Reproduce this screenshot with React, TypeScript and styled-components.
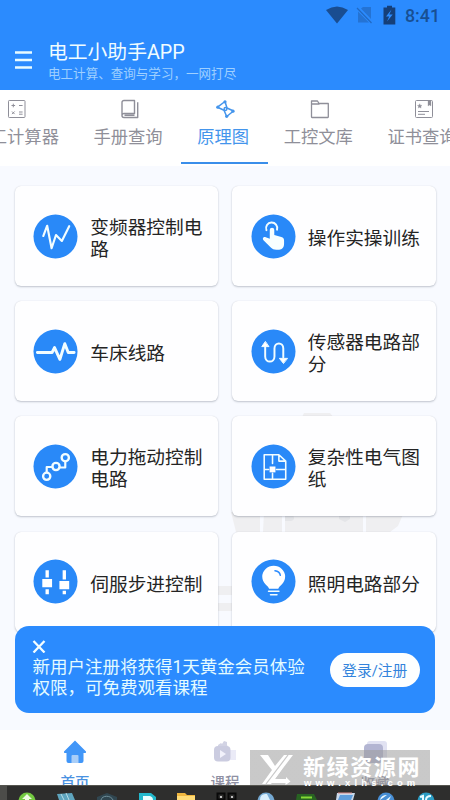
import React from "react";
import styled, { createGlobalStyle } from "styled-components";

const BLUE = "#2b8bfe";

const GlobalStyle = createGlobalStyle`
  * { box-sizing: border-box; }
  body { margin: 0; background: #f8faff; font-family: Roboto, "Noto Sans CJK SC", sans-serif; }
`;

const Screen = styled.div`
  position: relative;
  width: 450px;
  height: 800px;
  overflow: hidden;
  display: flex;
  flex-direction: column;
  background: #f8faff;
`;

const Header = styled.header`
  flex: none;
  height: 90px;
  background: ${BLUE};
`;

const StatusBar = styled.div`
  height: 32px;
  padding: 0 10px 0 0;
  display: flex;
  justify-content: flex-end;
  align-items: center;
  color: #184f93;
`;

const StatusIcons = styled.svg`
  display: block;
  margin-right: 9px;
`;

const Clock = styled.span`
  font-size: 17.8px;
  line-height: 20px;
  font-weight: 500;
`;

const TitleBar = styled.div`
  display: flex;
  align-items: flex-start;
  padding-left: 15px;
`;

const MenuIcon = styled.svg`
  display: block;
  margin: 18px 15px 0 0;
`;

const Title = styled.h1`
  margin: 7px 0 0;
  height: 26px;
  font-size: 19.8px;
  line-height: 27px;
  font-weight: 400;
  color: #f0fcff;
  white-space: nowrap;
`;

const Subtitle = styled.p`
  margin: 0;
  font-size: 12.55px;
  line-height: 18px;
  color: #9fd0ff;
`;

const Tabs = styled.nav`
  flex: none;
  height: 76px;
  background: #fff;
  overflow: hidden;
  display: flex;
`;

const TabTrack = styled.div`
  display: flex;
  margin-left: -43.3px;
`;

const Tab = styled.div<{ $active?: boolean }>`
  flex: none;
  height: 73.5px;
  padding: 9px 17.3px 0;
  display: flex;
  flex-direction: column;
  align-items: center;
  color: ${(p) => (p.$active ? "#4495ec" : "#8f8f99")};
  border-bottom: 2.5px solid ${(p) => (p.$active ? "#3a8eea" : "transparent")};
  svg { display: block; }
`;

const TabLabel = styled.span`
  margin: 5px 1.5px 0 -1.5px;
  font-size: 17.3px;
  line-height: 26px;
  white-space: nowrap;
`;

const Content = styled.main`
  position: relative;
  flex: none;
  height: 564px;
  padding: 20px 14.5px 0;
  overflow: hidden;
`;

const Backdrop = styled.svg`
  position: absolute;
  left: 0;
  top: 0;
`;

const CardGrid = styled.div`
  position: relative;
  display: grid;
  grid-template-columns: 203px 203.5px;
  grid-auto-rows: 100px;
  gap: 15.2px 14.5px;
`;

const Card = styled.div`
  display: flex;
  align-items: center;
  padding-left: 18.5px;
  border-radius: 6px;
  background: #fefeff;
  box-shadow: 0 1px 2px rgba(40, 50, 70, 0.26), 0 0 1px rgba(40, 50, 70, 0.15);
`;

const CardIcon = styled.svg`
  flex: none;
  display: block;
  margin-right: 12.3px;
`;

const CardLabel = styled.span`
  width: 116px;
  padding-top: 6px;
  font-size: 18.7px;
  line-height: 22px;
  color: #242424;
`;

const Banner = styled.section`
  position: absolute;
  left: 15px;
  top: 626px;
  width: 420px;
  height: 87px;
  padding: 13.5px 15px 0 17.5px;
  border-radius: 14px;
  background: ${BLUE};
  display: flex;
  justify-content: space-between;
`;

const BannerText = styled.div`
  width: 280px;
  color: #e4fbff;
  font-size: 17.5px;
  line-height: 20.6px;
  svg { display: block; margin: 0 0 4.5px -1px; }
`;

const BannerLine = styled.div`
  white-space: nowrap;
`;

const LoginButton = styled.button`
  margin: 13px 0 0;
  width: 90.5px;
  height: 34.5px;
  padding: 0;
  border: 0;
  border-radius: 18px;
  background: #fdffff;
  color: #3284dc;
  font-family: inherit;
  font-size: 14.8px;
  line-height: 36px;
`;

const BottomNav = styled.nav`
  flex: none;
  height: 55px;
  background: #fff;
  display: grid;
  grid-template-columns: repeat(3, 150px);
  overflow: hidden;
`;

const NavItem = styled.div<{ $active?: boolean }>`
  height: 62px;
  display: flex;
  flex-direction: column;
  align-items: center;
  padding-top: 9px;
  color: ${(p) => (p.$active ? "#4a92e2" : "#8f90a3")};
  font-size: 14.5px;
  font-weight: 500;
  line-height: 22px;
  svg { display: block; flex: none; margin-bottom: 7.5px; }
`;

const Taskbar = styled.footer`
  position: relative;
  flex: none;
  height: 15px;
  background: #2e2e2d;
  svg { display: block; }
`;

const Watermark = styled.div`
  position: absolute;
  left: 250px;
  top: 750px;
  width: 180px;
  height: 36px;
  display: flex;
  padding-left: 9px;
  overflow: hidden;
  background: linear-gradient(rgba(155, 155, 155, 0.54) 35px, transparent 35px);
  color: #fff;
  svg { display: block; flex: none; margin-right: 8px; }
`;

const WatermarkName = styled.div`
  height: 25px;
  margin-top: 2.5px;
  font-family: "Noto Sans CJK SC", sans-serif;
  font-size: 22px;
  font-weight: 700;
  line-height: 25px;
  letter-spacing: 1.6px;
  white-space: nowrap;
`;

const WatermarkUrl = styled.div`
  margin-left: 1px;
  font-family: "Liberation Sans", sans-serif;
  font-size: 9.5px;
  font-weight: 700;
  line-height: 9px;
  letter-spacing: 4.15px;
  white-space: nowrap;
`;

const line = { fill: "none", stroke: "currentColor", strokeLinejoin: "round" as const };

const tabs = [
  {
    label: "电工计算器",
    icon: (
      <g {...line} strokeWidth="1">
        <rect x="1.5" y="1.5" width="16.5" height="17" rx="0.8" />
        <path d="M4.5 6.5h3.6M6.3 4.7v3.6M12 6.5h3.6M5 12.5l2.6 2.6M7.6 12.5l-2.6 2.6M12 13h3.6M12 15.2h3.6" />
      </g>
    ),
  },
  {
    label: "手册查询",
    icon: (
      <g {...line} strokeWidth="1.4">
        <path d="M4 1.5h10.5v13H4a2 2 0 0 0 0 4h13.7V3.2M2 16.5V3.5a2 2 0 0 1 2-2M4.5 16.3h10" />
      </g>
    ),
  },
  {
    label: "原理图",
    active: true,
    icon: (
      <g {...line} strokeWidth="1.5">
        <path d="M10 2.500L2.500 8.200l6.500 3 2.700 6.300 6.800-5.500-6.500-3z" />
        <circle cx="10.500" cy="10" r="1.400" fill="#fff" />
        <g fill="currentColor" stroke="none">
          <circle cx="10" cy="2.800" r="1.600" />
          <circle cx="2.800" cy="8.200" r="1.600" />
          <circle cx="18" cy="12.200" r="1.600" />
          <circle cx="11.700" cy="17.300" r="1.600" />
        </g>
      </g>
    ),
  },
  {
    label: "工控文库",
    icon: (
      <g {...line} strokeWidth="1.3">
        <path d="M1.5 18V2h6l1.5 2.5h9.3V18a.5.5 0 0 1-.5.5H2a.5.5 0 0 1-.5-.5zM1.5 5h8" />
      </g>
    ),
  },
  {
    label: "证书查询",
    icon: (
      <g {...line} strokeWidth="1">
        <rect x="1.5" y="1.5" width="17" height="17" rx="1" />
        <path d="M5.7 4.7l.7 1.5 1.6.2-1.2 1.1.3 1.6-1.400-.8-1.400.8.3-1.600-1.200-1.100 1.600-.2zM14 2h3v5l-1.500-1-1.500 1z" fill="currentColor" strokeWidth="0.3" />
        <path d="M4 12.5h11M4 15.3h7" />
      </g>
    ),
  },
];

const cards = [
  {
    label: "变频器控制电路",
    icon: <path d="M10.5 22.5l4-10.5 4.5 23 4.5-13.5 6 6L37 12.5" strokeWidth="2.2" />,
  },
  {
    label: "操作实操训练",
    icon: (
      <>
        <path d="M15.8 16.5a5.700 5.700 0 1 1 10.800-.5" strokeWidth="2" />
        <path d="M19.2 16.5c0-3.300 4.600-3.300 4.600 0v5l7.200 2c2 .6 2.800 1.700 2.800 3.500v3.500c0 3.800-2 6-5 6h-3c-2.500 0-4-.7-5.300-2l-7.500-7.500c-1.800-1.800-.4-4 2-3.300l4.200 1.500z" fill="#f8ffff" stroke="none" />
      </>
    ),
  },
  {
    label: "车床线路",
    icon: <path d="M4.5 24h15l2.500-5 5.500 12 5-16 3.500 9h6" strokeWidth="3" />,
  },
  {
    label: "传感器电路部分",
    icon: (
      <>
        <path d="M14.5 17v11c0 7 9.500 7 9.500 0v-8c0-7 9-7 9 0v9" strokeWidth="2" />
        <path d="M14.5 13l-3.500 5h7zM33 35l-4-5h8z" fill="#fff" strokeWidth="1" />
      </>
    ),
  },
  {
    label: "电力拖动控制电路",
    icon: (
      <>
        <path d="M14 28.500v-5h6M27 24h6v-6" strokeWidth="2.2" />
        <circle cx="14" cy="33" r="3.7" strokeWidth="2.4" />
        <circle cx="23.5" cy="23" r="3.7" strokeWidth="2.4" />
        <circle cx="33" cy="14" r="3.7" strokeWidth="2.4" />
      </>
    ),
  },
  {
    label: "复杂性电气图纸",
    icon: (
      <>
        <path d="M13.5 11h15l7 6.500V36h-22zM28.500 11v6.500h7M22 11v9M22 30v6M13.500 26H18M26 26h9" strokeWidth="1.6" />
        <rect x="19" y="23" width="6" height="6" fill="#fff" stroke="none" />
      </>
    ),
  },
  {
    label: "伺服步进控制",
    icon: (
      <path
        d="M12.8 11.5h3.400v7.500h-3.400zM9.500 20.500h10v8.500h-10zM12.800 31h3.400v5h-3.400zM30.300 11.500h3.400v9.500h-3.400zM27 22.500h10V31H27zM30.300 32.500h3.400V36h-3.400z"
        fill="#fff"
        stroke="none"
      />
    ),
  },
  {
    label: "照明电路部分",
    icon: (
      <>
        <path d="M18.500 30.500c-.6-3-7-5.500-7-12.300a11.700 11.200 0 0 1 23.400 0c0 6.800-6.300 9.300-7 12.300z" fill="#fff" stroke="none" />
        <path d="M24.500 12c3 .3 5 2 5.500 4.700" stroke={BLUE} strokeWidth="1.5" />
        <path d="M18 33h10.500M20 36.500h6.500" strokeWidth="1.7" />
      </>
    ),
  },
];

export default function App() {
  return (
    <>
      <GlobalStyle />
      <Screen>
        <Header>
          <StatusBar>
            <StatusIcons width="71" height="22" viewBox="0 0 71 22">
              <path d="M1 5Q12 -2 23 5L12 18.500z" fill="#194d91" />
              <path d="M36 3.500L46 14V2H38zM33 6.500V17.500h11z" fill="#2473d4" />
              <path d="M32 3L46.500 18" stroke="#2169c3" strokeWidth="1.2" />
              <path d="M58.500 2.500H62V.8h5v1.700h3.300v17H58.500z" fill="#153f78" />
              <path d="M66.500 4.500l-5.500 7h3.200l-2.200 5 5.700-7h-3.400z" fill={BLUE} />
            </StatusIcons>
            <Clock>8:41</Clock>
          </StatusBar>
          <TitleBar>
            <MenuIcon width="18" height="20" viewBox="0 0 18 20">
              <path d="M0 2.500h17M0 10h17M0 17.500h17" stroke="#e8fbff" strokeWidth="2.3" />
            </MenuIcon>
            <div>
              <Title>电工小助手APP</Title>
              <Subtitle>电工计算、查询与学习，一网打尽</Subtitle>
            </div>
          </TitleBar>
        </Header>

        <Tabs>
          <TabTrack>
            {tabs.map((t) => (
              <Tab key={t.label} $active={t.active}>
                <svg width="20" height="20" viewBox="0 0 20 20">{t.icon}</svg>
                <TabLabel>{t.label}</TabLabel>
              </Tab>
            ))}
          </TabTrack>
        </Tabs>

        <Content>
          <Backdrop width="450" height="564" viewBox="0 0 450 564" fill="#efeff1">
            <path d="M304 247h26l5 6h-34zM217 420h16v9h-16zM217 437h16v8h-16z" />
            <path d="M231 346h29v20h-24zM264 346h18v20h-19zM285 346h78v20h-78zM366 346h38l-6 14-8 6h-24z" />
            <path d="M285 349h8q3 5-2 6h-6zM339 349h11v4l-5 3-6-3z" fill="#e4e5e8" />
          </Backdrop>
          <CardGrid>
            {cards.map((c) => (
              <Card key={c.label}>
                <CardIcon width="45" height="45" viewBox="0 0 46 46" fill="none" stroke="#f2fdff" strokeLinejoin="round" strokeLinecap="round">
                  <circle cx="23" cy="23" r="22.5" fill="#2989f8" stroke="none" />
                  {c.icon}
                </CardIcon>
                <CardLabel>{c.label}</CardLabel>
              </Card>
            ))}
          </CardGrid>
        </Content>

        <BottomNav>
          <NavItem $active>
            <svg width="26" height="26" viewBox="0 0 26 26">
              <path d="M13 1.500L24 12.500q.5 1.500-1 1.500h-1.500v8q0 2-2 2h-13q-2 0-2-2v-8H3q-1.500 0-1-1.500z" fill="#4196f8" />
              <path d="M9.500 17q0-1 1-1h5q1 0 1 1v7h-7z" fill="#a9cef8" />
            </svg>
            首页
          </NavItem>
          <NavItem>
            <svg width="26" height="26" viewBox="0 0 26 26">
              <path d="M9 11h15v10H9z" fill="#ebebf7" />
              <path d="M6 8V6l3-2 1 1 2-3 3 1v3l1 2" fill="#d2d3e4" />
              <rect x="2" y="7" width="16.5" height="15.5" rx="4" fill="#cbcce0" />
              <path d="M8 11l6 4-6 4z" fill="#f2f2fb" />
            </svg>
            课程
          </NavItem>
          <NavItem>
            <svg width="26" height="26" viewBox="0 0 26 26">
              <rect x="5" y="2" width="20" height="20" rx="3" fill="#e1e2f2" />
              <rect x="2" y="5" width="19" height="19" rx="4" fill="#b3b5d2" />
            </svg>
            收藏
          </NavItem>
        </BottomNav>

        <Taskbar>
          <svg width="450" height="15" viewBox="0 -1 450 15">
            <path d="M0 -1h450v1H0z" fill="#55554f" />
            <path d="M0 0h7v14H0z" fill="#4c4c49" />
            <circle cx="27" cy="15" r="8.5" fill="#73c940" />
            <path d="M27 8l-5 5h3v2h4v-2h3z" fill="#effbe2" />
            <path d="M57 8l15-1 3 7H59z" fill="#5ea4bd" />
            <path d="M61 8l3 6M66 7l3 7" stroke="#b7dce7" />
            <path d="M97 14V11l10-4 10 4v3z" fill="#304650" />
            <path d="M101 14c1-5 10-5 12 0" fill="none" stroke="#70909b" />
            <path d="M139 7h12l5 4v3h-17z" fill="#22b8cc" />
            <path d="M143 10h7q3 1 3 4h-10z" fill="#eaffff" />
            <path d="M177 7h8l2 2h8v5h-18z" fill="#f0b63e" />
            <path d="M177 10h18v4h-18z" fill="#ffdb76" />
            <path d="M217.500 7.500h7v6h-7zM228.500 7.500h7v6h-7z" fill="none" stroke="#090909" strokeWidth="2" />
            <path d="M220 10h2v2h-2zM231 10h2v2h-2z" fill="#c0c0c0" />
            <circle cx="266" cy="15" r="8.5" fill="#75a9d2" />
            <path d="M260 14q0-7 7-6l3 6z" fill="#d9effc" />
            <path d="M297 8h17l3 6h-21z" fill="#286322" />
            <path d="M301 11.500h11" stroke="#85da35" strokeWidth="2" />
            <path d="M337 7h18l-2 7h-17z" fill="#cad8e9" />
            <path d="M340 9h13l-2 5h-13z" fill="#5f9ddb" />
            <path d="M338 7h14" stroke="#df8d8b" />
            <circle cx="386" cy="15" r="8.5" fill="#488fd5" />
            <path d="M380 14q1-5 7-5M386 14l5-4-2 4z" fill="#eefaff" />
            <circle cx="426" cy="15" r="8.5" fill="#2c9dc4" />
            <path d="M420 11l3-1v4M426 14q0-4 5-4" fill="none" stroke="#e9fbff" strokeWidth="2" />
          </svg>
        </Taskbar>

        <Banner>
          <BannerText>
            <svg width="15" height="13" viewBox="0 0 15 13">
              <path d="M1.500 1l11 11.500M12.500 1l-11 11.500" stroke="#f4fdff" strokeWidth="2.3" />
            </svg>
            <BannerLine>新用户注册将获得1天黄金会员体验</BannerLine>
            <BannerLine>权限，可免费观看课程</BannerLine>
          </BannerText>
          <LoginButton>登录/注册</LoginButton>
        </Banner>

        <Watermark>
          <svg width="36" height="36" viewBox="0 0 36 36">
            <path d="M1 5h8l7 11 9-11h9L12 34H3l10-14z" fill="#fff" />
            <path d="M23 19l-7 10h11v-2l4.500 4.500-5 3.500v-2H10L20 19z" fill="#fff" />
            <path d="M29 5L7 34" stroke="#c7c7c7" strokeWidth="1.2" />
          </svg>
          <div>
            <WatermarkName>新绿资源网</WatermarkName>
            <WatermarkUrl>www.xlhs.com</WatermarkUrl>
          </div>
        </Watermark>
      </Screen>
    </>
  );
}
